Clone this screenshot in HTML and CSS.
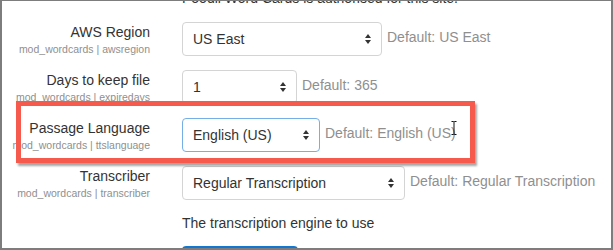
FILE: index.html
```html
<!DOCTYPE html>
<html lang="en">
<head>
    <meta charset="UTF-8">
    <title>Word Cards settings</title>
    <link rel="stylesheet" href="styles.css">
</head>
<body>
    <div class="frame">
        <p class="intro">Poodll Word Cards is authorised for this site.</p>

        <div class="form-row">
            <div class="label">
                <div class="label-name">AWS Region</div>
                <div class="label-sub">mod_wordcards | awsregion</div>
            </div>
            <div class="control">
                <div class="select select-region">
                    <span>US East</span>
                    <span class="arrows"><i class="up"></i><i class="down"></i></span>
                </div>
                <span class="default">Default: US East</span>
            </div>
        </div>

        <div class="form-row">
            <div class="label">
                <div class="label-name">Days to keep file</div>
                <div class="label-sub">mod_wordcards | expiredays</div>
            </div>
            <div class="control">
                <div class="select select-days">
                    <span>1</span>
                    <span class="arrows"><i class="up"></i><i class="down"></i></span>
                </div>
                <span class="default">Default: 365</span>
            </div>
        </div>

        <div class="form-row">
            <div class="label">
                <div class="label-name">Passage Language</div>
                <div class="label-sub">mod_wordcards | ttslanguage</div>
            </div>
            <div class="control">
                <div class="select select-lang focused">
                    <span>English (US)</span>
                    <span class="arrows"><i class="up"></i><i class="down"></i></span>
                </div>
                <span class="default">Default: English (US)</span>
            </div>
        </div>

        <div class="form-row">
            <div class="label">
                <div class="label-name">Transcriber</div>
                <div class="label-sub">mod_wordcards | transcriber</div>
            </div>
            <div class="control">
                <div class="select select-trans">
                    <span>Regular Transcription</span>
                    <span class="arrows"><i class="up"></i><i class="down"></i></span>
                </div>
                <span class="default">Default: Regular Transcription</span>
            </div>
        </div>

        <p class="help">The transcription engine to use</p>
        <button class="save-btn" aria-label="Save changes"></button>

        <!-- annotation -->
        <div class="highlight"></div>
        <svg class="cursor" width="6" height="14" viewBox="0 0 6 14">
            <path d="M0.5 0.5 H2.5 L3 1 L3.5 0.5 H5.5 M3 1 V13 M0.5 13.5 H2.5 L3 13 L3.5 13.5 H5.5" fill="none" stroke="#111" stroke-width="1"/>
        </svg>
    </div>
</body>
</html>
```

FILE: styles.css
```css
/* Base */
html, body {
    margin: 0;
    padding: 0;
    overflow: hidden;
}

body {
    font-family: 'Helvetica Neue', 'Liberation Sans', Arial, sans-serif;
    color: #333;
    background: white;
}

.frame {
    position: relative;
    width: 613px;
    height: 250px;
    box-sizing: border-box;
    border: 2px solid #7d7d7d;
    border-top-width: 1px;
    overflow: hidden;
}

.intro {
    margin: -13px 0 0 180px;
    font-size: 14px;
    line-height: 20px;
}

/* Setting rows */
.form-row {
    display: grid;
    grid-template-columns: 148px 1fr;
    column-gap: 32px;
    margin-top: 13px;
}

.intro + .form-row {
    margin-top: 14px;
}

.label {
    text-align: right;
}

.label-name {
    font-size: 14px;
    line-height: 20px;
}

.label-sub {
    font-size: 10.5px;
    line-height: 15px;
    color: #8f8f8f;
    white-space: nowrap;
}

.control {
    display: flex;
    align-items: flex-start;
    gap: 5px;
}

.select {
    display: flex;
    align-items: center;
    justify-content: space-between;
    box-sizing: border-box;
    height: 34px;
    padding: 0 10px 0 10px;
    border: 1px solid #d4d4d4;
    border-radius: 4px;
    font-size: 14px;
    line-height: 20px;
    color: #333;
    background: white;
}

.select.focused {
    border-color: #76aee6;
}

.select-region { width: 200px; }
.select-days { width: 115px; }
.select-lang { width: 138px; }
.select-trans { width: 223px; }

.arrows {
    display: flex;
    flex-direction: column;
    gap: 2px;
}

.arrows i {
    display: block;
    width: 0;
    height: 0;
    border-left: 3.5px solid transparent;
    border-right: 3.5px solid transparent;
}

.arrows .up {
    border-bottom: 4px solid #333;
}

.arrows .down {
    border-top: 4px solid #333;
}

.default {
    padding-top: 5px;
    font-size: 14px;
    line-height: 20px;
    color: #8f8f8f;
    white-space: nowrap;
}

.help {
    margin: 12px 0 0 180px;
    font-size: 14px;
    line-height: 20px;
}

.save-btn {
    display: block;
    margin: 13px 0 0 180px;
    width: 116px;
    height: 34px;
    border: none;
    border-radius: 4px;
    background-color: #1177d1;
}

/* Red annotation box */
.highlight {
    position: absolute;
    left: 14px;
    top: 100px;
    width: 459px;
    height: 62px;
    box-sizing: border-box;
    border: 5px solid #f55a4d;
    box-shadow: 2px 3px 2px rgba(0, 0, 0, 0.35);
}

.cursor {
    position: absolute;
    left: 449px;
    top: 120px;
}
```
